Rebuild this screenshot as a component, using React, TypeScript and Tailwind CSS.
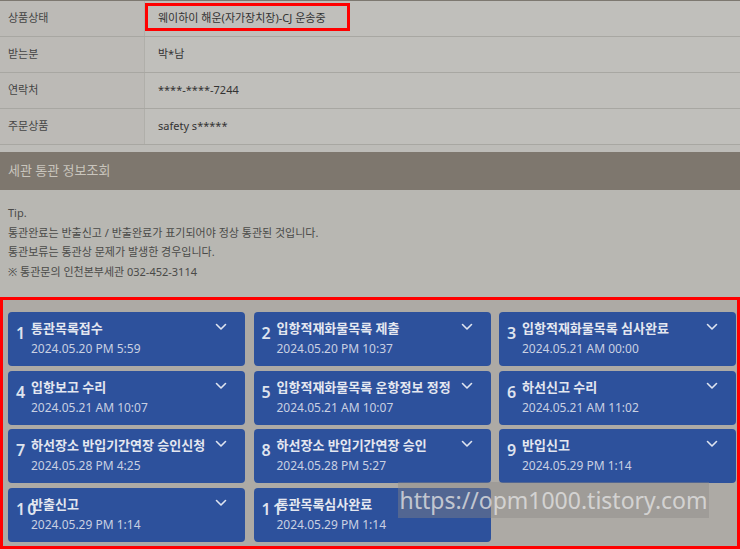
import React from 'react';

const FONT = '"Noto Sans", "Noto Sans CJK KR", sans-serif';

const info = [
  { label: '상품상태', value: '웨이하이 해운(자가장치장)-CJ 운송중', mark: true },
  { label: '받는분', value: '박*남' },
  { label: '연락처', value: '****-****-7244' },
  { label: '주문상품', value: 'safety s*****' },
];

const steps = [
  { no: '1', title: '통관목록접수', date: '2024.05.20 PM 5:59' },
  { no: '2', title: '입항적재화물목록 제출', date: '2024.05.20 PM 10:37' },
  { no: '3', title: '입항적재화물목록 심사완료', date: '2024.05.21 AM 00:00' },
  { no: '4', title: '입항보고 수리', date: '2024.05.21 AM 10:07' },
  { no: '5', title: '입항적재화물목록 운항정보 정정', date: '2024.05.21 AM 10:07' },
  { no: '6', title: '하선신고 수리', date: '2024.05.21 AM 11:02' },
  { no: '7', title: '하선장소 반입기간연장 승인신청', date: '2024.05.28 PM 4:25' },
  { no: '8', title: '하선장소 반입기간연장 승인', date: '2024.05.28 PM 5:27' },
  { no: '9', title: '반입신고', date: '2024.05.29 PM 1:14' },
  { no: '10', title: '반출신고', date: '2024.05.29 PM 1:14' },
  { no: '11', title: '통관목록심사완료', date: '2024.05.29 PM 1:14', noChevron: true },
];

function Chevron() {
  return (
    <svg width="12" height="8" viewBox="0 0 12 8" fill="none" className="shrink-0">
      <path d="M1.5 1.5 L6 6 L10.5 1.5" stroke="#dfe4f0" strokeWidth="1.6" strokeLinecap="round" strokeLinejoin="round" />
    </svg>
  );
}

function StepCard({ no, title, date, noChevron }: { no: string; title: string; date: string; noChevron?: boolean }) {
  return (
    <div className="h-[54px] rounded-[4px] bg-[#2d519c] flex pl-[8px] pr-[18px] pt-[7px]">
      <div className="w-[15px] shrink-0 whitespace-nowrap text-[16px] font-semibold text-[#dfe3ee] leading-[20px] mt-[4px] tracking-[2px]">
        {no}
      </div>
      <div className="flex-1 min-w-0">
        <div className="text-[13px] font-bold text-[#e4e7f0] leading-[18px] whitespace-nowrap">{title}</div>
        <div className="text-[12px] text-[#c9d0e2] leading-[18px] mt-[3px]">{date}</div>
      </div>
      <div className="pt-[4px] pl-1">{!noChevron && <Chevron />}</div>
    </div>
  );
}

export default function App() {
  return (
    <div className="w-[740px] h-[549px] overflow-hidden bg-[#b8b7b2] relative" style={{ fontFamily: FONT }}>
      {/* order info table */}
      <div className="border-t border-[#7d7870] bg-[#c0bfbb]">
        {info.map((r) => (
          <div key={r.label} className="h-[36px] flex border-b border-[#a8a7a2]">
            <div className="w-[145px] shrink-0 bg-[#bcbab6] border-r border-[#b0afaa] flex items-center pl-[8px] text-[11px] text-[#444]">
              {r.label}
            </div>
            <div className="relative flex-1 flex items-center pl-[13px] text-[11px] text-[#333]">
              {r.value}
              {r.mark && <div className="absolute left-0 top-[2px] w-[205px] h-[28px] border-[3px] border-[#ff0000]" />}
            </div>
          </div>
        ))}
      </div>

      <div className="h-[7px] bg-[#bdbcb8]" />

      {/* customs header */}
      <div className="h-[38px] bg-[#7e776e] flex items-center pl-[8px] text-[13px] text-[#c9c5bd]">
        세관 통관 정보조회
      </div>

      {/* tip */}
      <div className="px-[8px] pt-[13px] h-[107px] text-[11px] leading-[19.5px] text-[#4a4a48]">
        <div>Tip.</div>
        <div>통관완료는 반출신고 / 반출완료가 표기되어야 정상 통관된 것입니다.</div>
        <div>통관보류는 통관상 문제가 발생한 경우입니다.</div>
        <div>※ 통관문의 인천본부세관 032-452-3114</div>
      </div>

      {/* steps */}
      <div className="h-[252px] border-[3px] border-[#ff0000] bg-[#adaaa5] pl-[5px] pt-[12px]">
        <div className="grid grid-cols-[237px_237px_237px] gap-x-[8.5px] gap-y-[4.5px]">
          {steps.map((s) => (
            <StepCard key={s.no} {...s} />
          ))}
        </div>
      </div>

      {/* watermark */}
      <div className="absolute left-[398px] top-[482px] w-[311px] h-[36px] bg-[#8a8784]/40 flex items-center justify-center text-[23px] text-[#e2e2e2]/80 leading-none">
        https://opm1000.tistory.com
      </div>
    </div>
  );
}
